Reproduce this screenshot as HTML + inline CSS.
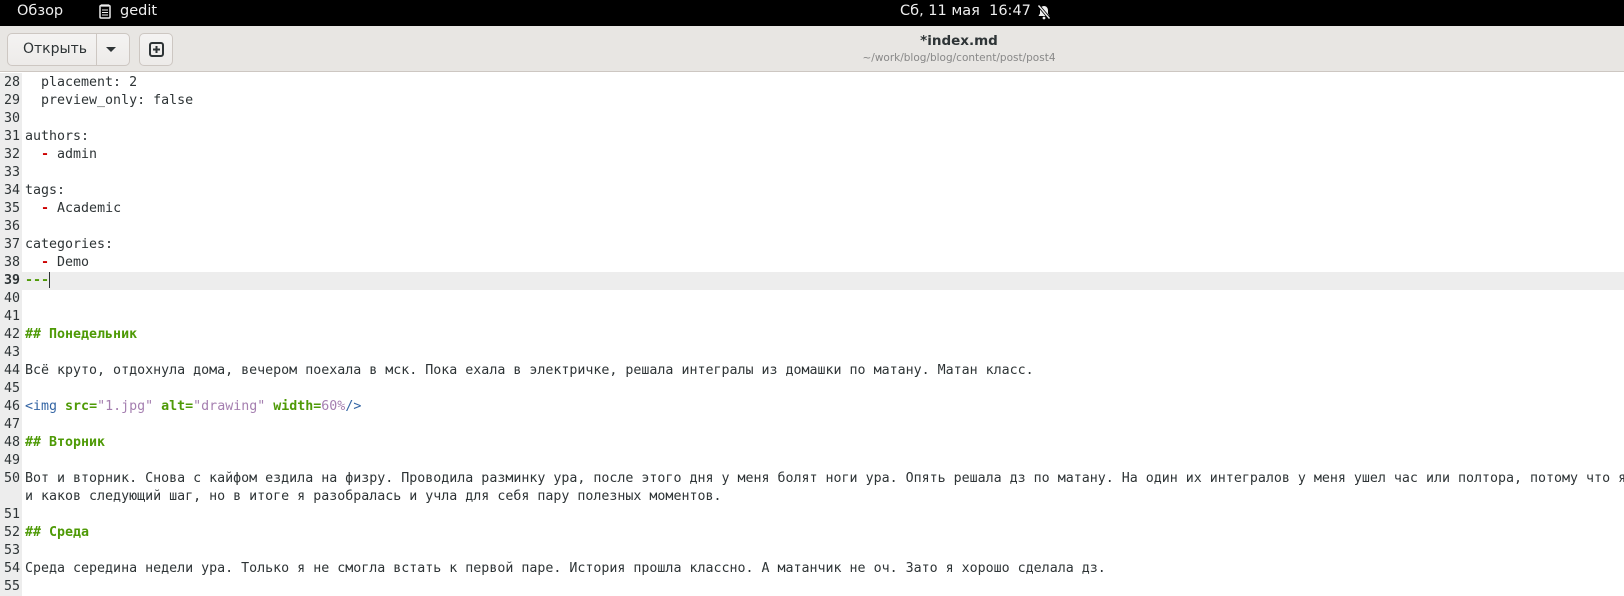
<!DOCTYPE html>
<html><head><meta charset="utf-8"><style>
*{margin:0;padding:0;box-sizing:border-box}
body{width:1624px;height:596px;overflow:hidden;background:#fff;font-family:"Liberation Sans","DejaVu Sans",sans-serif;position:relative}
#top{position:absolute;left:0;top:0;width:1624px;height:26px;background:#000;color:#eee;font-size:14.5px;font-family:"DejaVu Sans",sans-serif}
#top span{position:absolute;top:3px}
#hdr{position:absolute;left:0;top:26px;width:1624px;height:46px;background:#e8e6e3;border-bottom:1px solid #cdc7c2}
.btn{position:absolute;top:7px;height:33px;border:1px solid #cdc7c2;border-radius:5px;background:linear-gradient(#f4f3f2,#edebe9);font-size:14px;color:#2e3436;font-family:"DejaVu Sans",sans-serif}
#title{position:absolute;left:0;width:1918px;text-align:center;top:7px;font-size:13.5px;font-weight:bold;color:#2e3436;font-family:"DejaVu Sans",sans-serif}
#path{position:absolute;left:0;width:1918px;text-align:center;top:26px;font-size:10.5px;color:#888;font-family:"DejaVu Sans",sans-serif}
#gut{position:absolute;left:0;top:73px;width:22px;height:523px;background:#ededed}
#ed{position:absolute;left:0;top:73.5px;width:1624px;font-family:"DejaVu Sans Mono",monospace;font-size:13.3px;color:#2e3436}
.r{height:18px;line-height:18px;white-space:pre;position:relative;overflow:hidden}
.n{position:absolute;left:0;width:20px;text-align:right;color:#2e3436}
.t{position:absolute;left:25px}
.cur{background:#ededed}
.g{color:#4e9a06;font-weight:bold}
.gn{color:#4e9a06;font-weight:bold}
.red{color:#c00;font-weight:bold}
.b{color:#3465a4}
.p{color:#a57fb0}
</style></head><body>
<div id="top">
<span style="left:17px">Обзор</span>
<svg style="position:absolute;left:99px;top:4px" width="12" height="15" viewBox="0 0 12 15"><rect x="1" y="1.5" width="10" height="12.5" rx="1" fill="none" stroke="#eee" stroke-width="1.5"/><path d="M3 0v3M5 0v3M7 0v3M9 0v3M3 6h6M3 8.5h6M3 11h6" stroke="#eee" stroke-width="1"/></svg>
<span style="left:120px">gedit</span>
<span style="left:900px">Сб, 11 мая&nbsp; 16:47</span>
<svg style="position:absolute;left:1036px;top:4px" width="16" height="16" viewBox="0 0 16 16"><path d="M8 2c-2.5 0-4 2-4 4.5v3L2.5 12h11L12 9.5v-3C12 4 10.5 2 8 2z" fill="#eee"/><circle cx="8" cy="14" r="1.4" fill="#eee"/><path d="M2 1l12 14" stroke="#000" stroke-width="3"/><path d="M2.5 1.5l11 13" stroke="#eee" stroke-width="1.4"/></svg>
</div>
<div id="hdr">
<div class="btn" style="left:7px;width:123px"><span style="position:absolute;left:15px;top:7px">Открыть</span><div style="position:absolute;left:88px;top:0;width:1px;height:31px;background:#cdc7c2"></div><div style="position:absolute;left:98px;top:13px;width:0;height:0;border-left:5px solid transparent;border-right:5px solid transparent;border-top:5px solid #2e3436"></div></div>
<div class="btn" style="left:139px;width:34px"><svg style="position:absolute;left:9px;top:8px" width="15" height="15" viewBox="0 0 15 15"><rect x="1" y="1" width="13" height="13" rx="2" fill="none" stroke="#2e3436" stroke-width="2"/><path d="M7.5 4v7M4 7.5h7" stroke="#2e3436" stroke-width="2"/></svg></div>
<div id="title">*index.md</div>
<div id="path">~/work/blog/blog/content/post/post4</div>
</div>
<div id="gut"></div>
<div id="ed">
<div class="r"><span class="n">28</span><span class="t">  placement: 2</span></div>
<div class="r"><span class="n">29</span><span class="t">  preview_only: false</span></div>
<div class="r"><span class="n">30</span></div>
<div class="r"><span class="n">31</span><span class="t">authors:</span></div>
<div class="r"><span class="n">32</span><span class="t">  <span class="red">-</span> admin</span></div>
<div class="r"><span class="n">33</span></div>
<div class="r"><span class="n">34</span><span class="t">tags:</span></div>
<div class="r"><span class="n">35</span><span class="t">  <span class="red">-</span> Academic</span></div>
<div class="r"><span class="n">36</span></div>
<div class="r"><span class="n">37</span><span class="t">categories:</span></div>
<div class="r"><span class="n">38</span><span class="t">  <span class="red">-</span> Demo</span></div>
<div class="r cur"><span class="n" style="font-weight:bold">39</span><span class="t"><span class="gn">---</span><span style="display:inline-block;width:1px;height:16px;background:#2e3436;vertical-align:middle"></span></span></div>
<div class="r"><span class="n">40</span></div>
<div class="r"><span class="n">41</span></div>
<div class="r"><span class="n">42</span><span class="t g">## Понедельник</span></div>
<div class="r"><span class="n">43</span></div>
<div class="r"><span class="n">44</span><span class="t">Всё круто, отдохнула дома, вечером поехала в мск. Пока ехала в электричке, решала интегралы из домашки по матану. Матан класс.</span></div>
<div class="r"><span class="n">45</span></div>
<div class="r"><span class="n">46</span><span class="t"><span class="b">&lt;img</span> <span class="g">src=</span><span class="p">"1.jpg"</span> <span class="g">alt=</span><span class="p">"drawing"</span> <span class="g">width=</span><span class="p">60%</span><span class="b">/&gt;</span></span></div>
<div class="r"><span class="n">47</span></div>
<div class="r"><span class="n">48</span><span class="t g">## Вторник</span></div>
<div class="r"><span class="n">49</span></div>
<div class="r"><span class="n">50</span><span class="t">Вот и вторник. Снова с кайфом ездила на физру. Проводила разминку ура, после этого дня у меня болят ноги ура. Опять решала дз по матану. На один их интегралов у меня ушел час или полтора, потому что я</span></div>
<div class="r"><span class="t">и каков следующий шаг, но в итоге я разобралась и учла для себя пару полезных моментов.</span></div>
<div class="r"><span class="n">51</span></div>
<div class="r"><span class="n">52</span><span class="t g">## Среда</span></div>
<div class="r"><span class="n">53</span></div>
<div class="r"><span class="n">54</span><span class="t">Среда середина недели ура. Только я не смогла встать к первой паре. История прошла классно. А матанчик не оч. Зато я хорошо сделала дз.</span></div>
<div class="r"><span class="n">55</span></div>
</div>
</body></html>
